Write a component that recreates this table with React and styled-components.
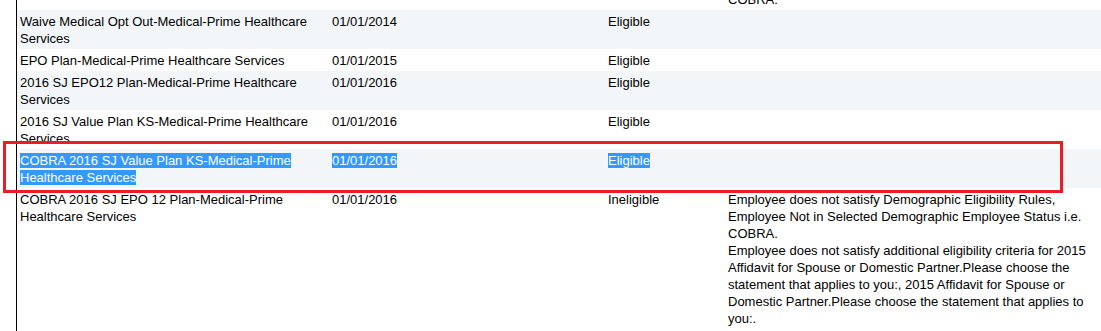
import React, { useLayoutEffect, useRef } from "react";
import styled, { createGlobalStyle } from "styled-components";

const GlobalStyle = createGlobalStyle`
  html, body {
    margin: 0;
    padding: 0;
    background: #fff;
  }
  body {
    font-family: "Liberation Sans", Arial, sans-serif;
    font-size: 13px;
    color: #000;
  }
`;

const rows = [
  {
    name: "",
    date: "",
    status: "",
    reason: [
      "Employee does not satisfy Demographic Eligibility Rules, Employee Not in Selected Demographic Employee Status i.e. COBRA.",
    ],
  },
  {
    name: "Waive Medical Opt Out-Medical-Prime Healthcare Services",
    date: "01/01/2014",
    status: "Eligible",
  },
  {
    name: "EPO Plan-Medical-Prime Healthcare Services",
    date: "01/01/2015",
    status: "Eligible",
  },
  {
    name: "2016 SJ EPO12 Plan-Medical-Prime Healthcare Services",
    date: "01/01/2016",
    status: "Eligible",
  },
  {
    name: "2016 SJ Value Plan KS-Medical-Prime Healthcare Services",
    date: "01/01/2016",
    status: "Eligible",
  },
  {
    name: "COBRA 2016 SJ Value Plan KS-Medical-Prime Healthcare Services",
    date: "01/01/2016",
    status: "Eligible",
    selected: true,
  },
  {
    name: "COBRA 2016 SJ EPO 12 Plan-Medical-Prime Healthcare Services",
    date: "01/01/2016",
    status: "Ineligible",
    reason: [
      "Employee does not satisfy Demographic Eligibility Rules, Employee Not in Selected Demographic Employee Status i.e. COBRA.",
      "Employee does not satisfy additional eligibility criteria for 2015 Affidavit for Spouse or Domestic Partner.Please choose the statement that applies to you:, 2015 Affidavit for Spouse or Domestic Partner.Please choose the statement that applies to you:.",
    ],
  },
];

const App = () => {
  const viewportRef = useRef(null);

  useLayoutEffect(() => {
    // the list is scrolled so that only the tail of the first row shows
    if (viewportRef.current) viewportRef.current.scrollTop = 46;
  }, []);

  return (
    <Page>
      <GlobalStyle />
      <Frame ref={viewportRef}>
        <Grid>
          <colgroup>
            <col style={{ width: 312 }} />
            <col style={{ width: 276 }} />
            <col style={{ width: 120 }} />
            <col />
          </colgroup>
          <tbody>
            {rows.map((row, i) => (
              <Row key={i}>
                <Cell>{row.selected ? <Selected>{row.name}</Selected> : row.name}</Cell>
                <Cell>{row.selected ? <Selected>{row.date}</Selected> : row.date}</Cell>
                <Cell>
                  {row.selected ? <Selected>{row.status}</Selected> : row.status}
                </Cell>
                <Cell>
                  {(row.reason || []).map((line, j) => (
                    <Reason key={j}>{line}</Reason>
                  ))}
                </Cell>
              </Row>
            ))}
          </tbody>
        </Grid>
      </Frame>
      <Marker />
    </Page>
  );
};

const Page = styled.div`
  position: relative;
  width: 100%;
  height: 100vh;
  overflow: hidden;
`;

const Frame = styled.div`
  margin-left: 16px;
  height: 100vh;
  border-left: 1px solid #000;
  overflow: hidden;
`;

const Grid = styled.table`
  width: 100%;
  table-layout: fixed;
  border-collapse: collapse;
  border-spacing: 0;
  margin-bottom: 400px;
`;

const Row = styled.tr`
  background: #fff;

  &:nth-child(even) {
    background: #f2f6f9;
  }
`;

const Cell = styled.td`
  padding: 3px 3px 2px 3px;
  vertical-align: top;
  line-height: 17px;
  font-size: 13px;
`;

const Reason = styled.div`
  line-height: 17px;
`;

const Selected = styled.span`
  background: #3399ff;
  color: #fff;
`;

const Marker = styled.div`
  position: absolute;
  left: 3px;
  top: 141px;
  width: 1060px;
  height: 52px;
  box-sizing: border-box;
  border: 3px solid #ed1c24;
  pointer-events: none;
`;

export default App;
